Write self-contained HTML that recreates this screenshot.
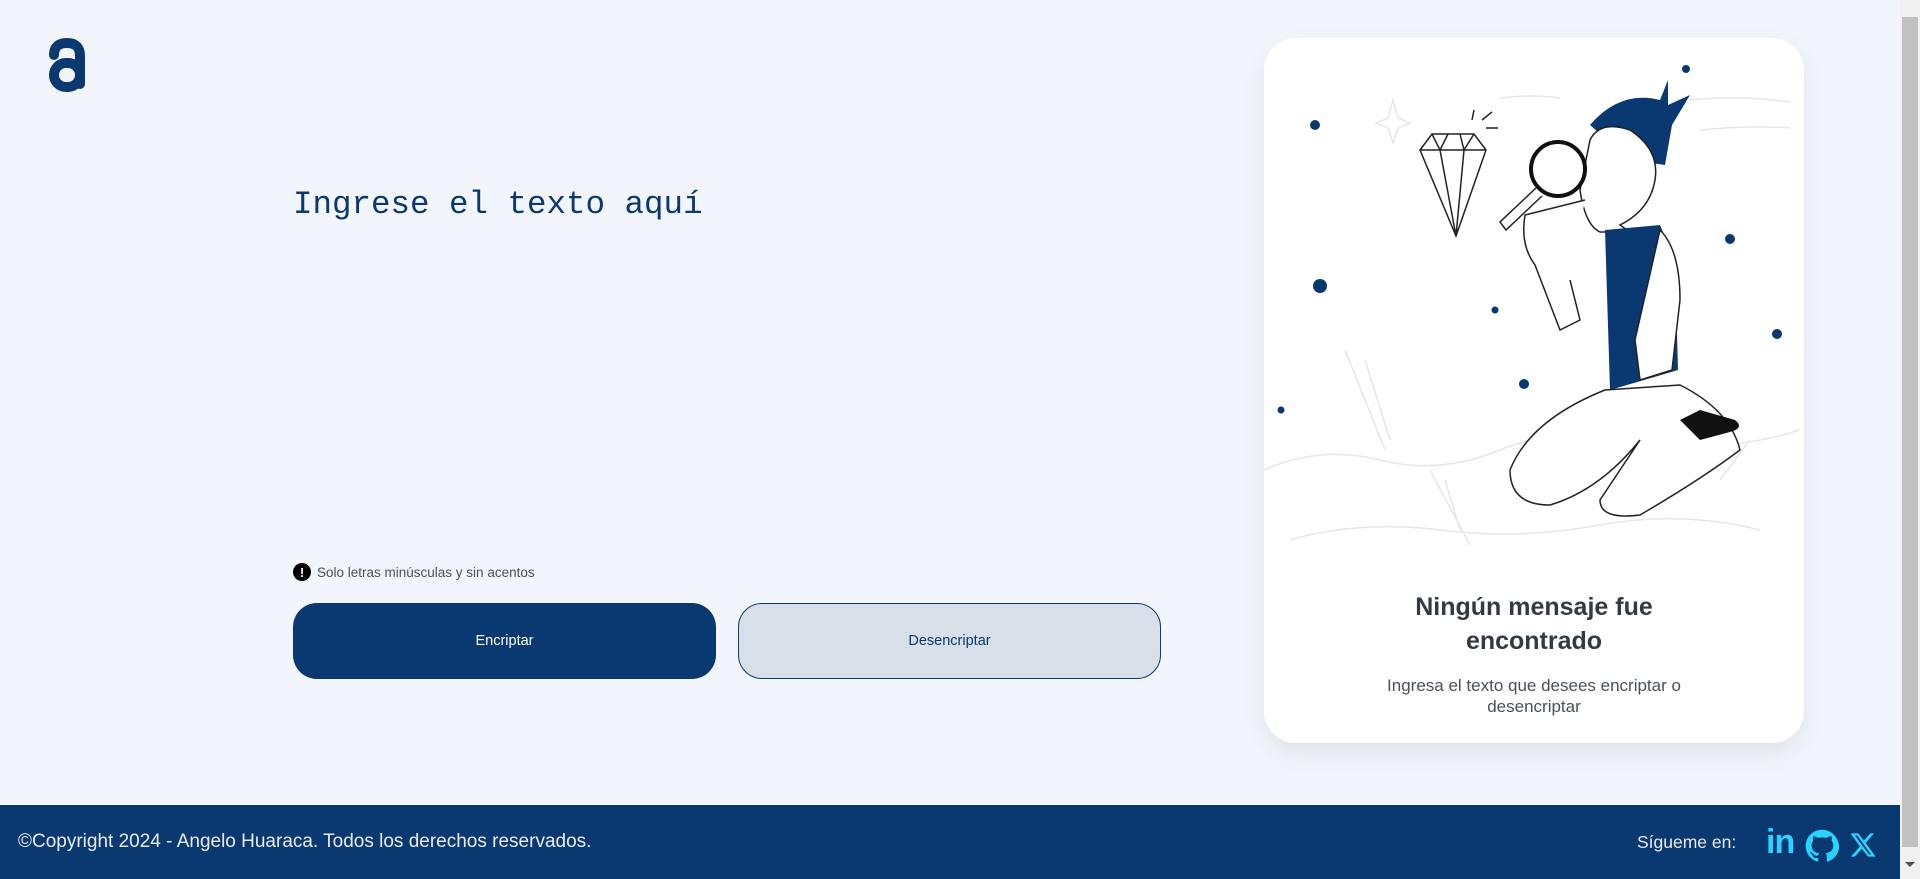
<!DOCTYPE html>
<html><head><meta charset="utf-8"><style>
*{margin:0;padding:0;box-sizing:border-box}
html,body{width:1920px;height:879px;overflow:hidden;background:#f3f5fc;font-family:"Liberation Sans",sans-serif}
.abs{position:absolute}
.ta{left:293px;top:185px;font-family:"Liberation Mono",monospace;font-size:32.5px;color:#0a3871;line-height:40px}
.warn{left:293px;top:563px;font-size:13.5px;color:#495057;display:flex;align-items:center;gap:6px}
.warn i{width:18px;height:18px;border-radius:50%;background:#000;color:#fff;font-style:normal;font-weight:bold;font-size:13px;display:flex;align-items:center;justify-content:center}
.btn{top:603px;width:423px;height:76px;border-radius:24px;display:flex;align-items:center;justify-content:center;font-size:14.5px}
.b1{left:293px;background:#0a3871;color:#fff}
.b2{left:738px;background:#d8dfe8;color:#0a3871;border:1px solid #0a3871}
.card{left:1264px;top:38px;width:540px;height:705px;background:#fff;border-radius:32px;box-shadow:0 10px 24px rgba(0,0,0,.08)}
.h{left:1264px;width:540px;top:590px;text-align:center;font-size:25px;font-weight:bold;color:#343a40;line-height:34px}
.p{left:1264px;width:540px;top:675px;text-align:center;font-size:17px;color:#495057;line-height:21px;padding:0 95px}
.foot{left:0;top:805px;width:1900px;height:74px;background:#0a3871;color:#e9ecef}
.sb{left:1900px;top:0;width:20px;height:879px;background:#f1f1f1}
</style></head><body>
<svg class="abs" style="left:0;top:0" width="120" height="110">
<g fill="none" stroke="#0a3871" stroke-width="10" stroke-linecap="round">
<path d="M54 55 Q54 43 67 43 Q80 43 80 56 V84"/>
<rect x="54" y="63" width="26" height="24" rx="12"/>
</g></svg>
<div class="abs ta">Ingrese el texto aquí</div>
<div class="abs warn"><i>!</i>Solo letras minúsculas y sin acentos</div>
<div class="abs btn b1">Encriptar</div>
<div class="abs btn b2">Desencriptar</div>
<div class="abs card"></div>
<svg class="abs" style="left:0;top:0" width="1920" height="879">
<g fill="none" stroke="#e6e6ea" stroke-width="1.5">
<path d="M1264 470 Q1320 445 1380 460 T1500 450 T1640 440 T1800 430"/>
<path d="M1290 540 Q1360 520 1440 530 T1600 525 T1760 530"/>
<path d="M1345 350 L1385 450 M1365 360 L1390 440 M1430 470 L1470 545 M1445 480 L1460 530"/>
<path d="M1700 470 L1740 420 M1720 480 L1750 440"/>
<path d="M1690 100 Q1740 95 1790 102 M1700 130 Q1750 125 1790 128 M1500 98 Q1530 94 1560 98"/>
<path d="M1393 100 L1398 118 L1410 123 L1398 128 L1393 143 L1388 128 L1376 123 L1388 118 Z"/>
</g>
<g fill="#0a3871">
<circle cx="1315" cy="125" r="5"/><circle cx="1320" cy="286" r="7"/><circle cx="1281" cy="410" r="3.5"/>
<circle cx="1495" cy="310" r="3.5"/><circle cx="1524" cy="384" r="5"/><circle cx="1686" cy="69" r="4"/>
<circle cx="1730" cy="239" r="5"/><circle cx="1777" cy="334" r="5"/>
</g>
<g fill="none" stroke="#222" stroke-width="1.5">
<path d="M1420 150 L1432 134 L1474 134 L1486 150 L1456 236 Z M1420 150 L1486 150 M1432 134 L1440 150 L1456 236 L1464 150 L1474 134 M1448 134 L1440 150 M1460 134 L1464 150"/>
<path d="M1472 120 L1474 110 M1482 120 L1492 112 M1486 128 L1498 128"/>
</g>
<path d="M1590 125 Q1620 90 1660 100 L1668 80 L1668 105 L1690 95 L1672 125 L1665 165 L1630 160 Z" fill="#0a3871"/>
<path d="M1590 140 Q1600 120 1630 130 Q1660 150 1655 180 Q1650 210 1620 225 L1630 232 L1600 232 Q1585 225 1580 190 Z" fill="#fff" stroke="#222" stroke-width="1.5"/>
<path d="M1605 230 L1660 225 L1675 260 L1678 370 L1610 390 Z" fill="#0a3871"/>
<path d="M1660 230 Q1680 250 1680 300 L1672 370 L1640 380 L1635 340 Z" fill="#fff" stroke="#222" stroke-width="1.5"/>
<path d="M1585 200 L1525 215 Q1520 245 1535 265 L1560 330 L1580 320 L1570 280" fill="#fff" stroke="#222" stroke-width="1.5"/>
<path d="M1605 390 Q1530 420 1510 470 Q1510 505 1550 505 Q1600 490 1640 440 L1600 500 Q1600 520 1640 515 Q1700 480 1740 450 Q1730 410 1680 385 Z" fill="#fff" stroke="#222" stroke-width="1.5"/>
<path d="M1680 420 L1700 410 L1735 420 Q1745 428 1730 432 L1700 440 Z" fill="#111"/>
<circle cx="1558" cy="169" r="27" fill="rgba(255,255,255,.5)" stroke="#111" stroke-width="4"/>
<path d="M1536 188 L1500 222 L1506 230 L1542 196" fill="#fff" stroke="#222" stroke-width="1.5"/>
</svg>
<div class="abs h">Ningún mensaje fue<br>encontrado</div>
<div class="abs p">Ingresa el texto que desees encriptar o desencriptar</div>
<div class="abs foot">
<div class="abs" style="left:18px;top:26px;font-size:19px">©Copyright 2024 - Angelo Huaraca. Todos los derechos reservados.</div>
<div class="abs" style="left:1637px;top:27px;font-size:17.5px">Sígueme en:</div>
<div class="abs" style="left:1766px;top:18px;font-size:34px;font-weight:bold;color:#2ad3ff;letter-spacing:-1px">in</div>
<svg class="abs" style="left:1805px;top:24px" width="34" height="34" viewBox="0 0 24 24"><path fill="#2ad3ff" d="M12 .5C5.6.5.5 5.6.5 12c0 5.1 3.3 9.4 7.9 10.9.6.1.8-.2.8-.6v-2c-3.2.7-3.9-1.5-3.9-1.5-.5-1.3-1.300-1.7-1.3-1.7-1-.7.1-.7.1-.7 1.2.1 1.8 1.2 1.8 1.2 1 1.8 2.7 1.3 3.4 1 .1-.8.4-1.3.7-1.6-2.6-.3-5.3-1.3-5.3-5.7 0-1.3.5-2.3 1.2-3.1-.1-.3-.5-1.5.1-3.1 0 0 1-.3 3.3 1.2a11.4 11.4 0 016 0c2.3-1.5 3.3-1.2 3.3-1.2.7 1.6.2 2.8.1 3.1.8.8 1.2 1.9 1.2 3.1 0 4.4-2.7 5.4-5.3 5.700.4.4.8 1.1.8 2.2v3.2c0 .3.2.7.8.6 4.6-1.5 7.9-5.8 7.9-10.9C23.5 5.6 18.4.5 12 .5z"/></svg>
<svg class="abs" style="left:1849px;top:26px" width="28" height="28" viewBox="0 0 24 24"><path fill="#2ad3ff" d="M18.2 2H21.5l-7.2 8.2L22.8 22h-6.6l-5.2-6.8L5 22H1.7l7.7-8.8L1.2 2H8l4.7 6.2L18.2 2zm-1.2 18h1.8L7.1 3.9H5.1L17 20z"/></svg>
</div>
<div class="abs sb"><div class="abs" style="left:2px;top:17px;width:16px;height:830px;background:#c1c1c1"></div>
<div class="abs" style="left:5px;top:862px;border:5px solid transparent;border-top-color:#505050"></div></div>
</body></html>
